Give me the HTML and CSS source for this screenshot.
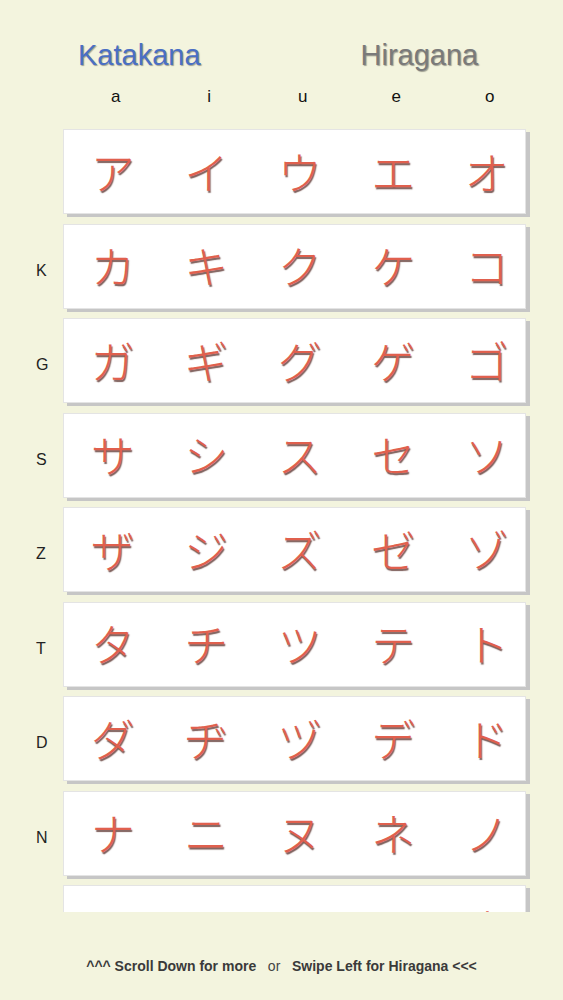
FILE: index.html
```html
<!DOCTYPE html>
<html lang="en">
<head>
    <meta charset="UTF-8">
    <meta name="viewport" content="width=device-width, initial-scale=1.0">
    <title>Katakana</title>
    <link rel="stylesheet" href="styles.css">
</head>
<body>
<div class="tabs">
    <div class="tab tab-active">Katakana</div>
    <div class="tab">Hiragana</div>
</div>
<div class="vowels">
    <span>a</span><span>i</span><span>u</span><span>e</span><span>o</span>
</div>
<div class="table">
    <div class="row">
        <div class="label"></div>
        <div class="card"><span>ア</span><span>イ</span><span>ウ</span><span>エ</span><span>オ</span></div>
    </div>
    <div class="row">
        <div class="label">K</div>
        <div class="card"><span>カ</span><span>キ</span><span>ク</span><span>ケ</span><span>コ</span></div>
    </div>
    <div class="row">
        <div class="label">G</div>
        <div class="card"><span>ガ</span><span>ギ</span><span>グ</span><span>ゲ</span><span>ゴ</span></div>
    </div>
    <div class="row">
        <div class="label">S</div>
        <div class="card"><span>サ</span><span>シ</span><span>ス</span><span>セ</span><span>ソ</span></div>
    </div>
    <div class="row">
        <div class="label">Z</div>
        <div class="card"><span>ザ</span><span>ジ</span><span>ズ</span><span>ゼ</span><span>ゾ</span></div>
    </div>
    <div class="row">
        <div class="label">T</div>
        <div class="card"><span>タ</span><span>チ</span><span>ツ</span><span>テ</span><span>ト</span></div>
    </div>
    <div class="row">
        <div class="label">D</div>
        <div class="card"><span>ダ</span><span>ヂ</span><span>ヅ</span><span>デ</span><span>ド</span></div>
    </div>
    <div class="row">
        <div class="label">N</div>
        <div class="card"><span>ナ</span><span>ニ</span><span>ヌ</span><span>ネ</span><span>ノ</span></div>
    </div>
    <div class="row">
        <div class="label"></div>
        <div class="card"><span>ハ</span><span>ヒ</span><span>フ</span><span>ヘ</span><span>ホ</span></div>
    </div>
</div>
<div class="footer">
    <b>^^^ Scroll Down for more</b>&nbsp;&nbsp;&nbsp;or&nbsp;&nbsp;&nbsp;<b>Swipe Left for Hiragana &lt;&lt;&lt;</b>
</div>
</body>
</html>
```
FILE: styles.css
```css
html, body {
    margin: 0;
    padding: 0;
}

body {
    background: #f3f4de;
    font-family: "Liberation Sans", Arial, sans-serif;
    color: #222;
    width: 563px;
    height: 1000px;
    overflow: hidden;
}

.tabs {
    display: flex;
    gap: 160px;
    padding: 38px 0 0 78px;
    height: 34px;
}

.tab {
    font-size: 29px;
    line-height: 34px;
    color: #7a7a7a;
    text-shadow: 1px 1px 1px rgba(0, 0, 0, 0.35);
}

.tab-active {
    color: #4a6fc4;
}

.vowels {
    display: grid;
    grid-template-columns: repeat(5, 93.5px);
    padding-left: 69px;
    margin-top: 15px;
    font-size: 17px;
    line-height: 20px;
    color: #111;
    text-align: center;
}

.table {
    margin-top: 22px;
    height: 783px;
    overflow: hidden;
}

.row {
    display: flex;
    align-items: center;
    margin-bottom: 9.5px;
}

.label {
    width: 63px;
    padding: 9px 0 0 36px;
    box-sizing: border-box;
    font-size: 16px;
    color: #222;
}

.card {
    width: 463px;
    height: 85px;
    box-sizing: border-box;
    background: #fff;
    border: 1px solid #e4e4e4;
    box-shadow: 4px 3px 0 #c6c6c6;
    display: grid;
    grid-template-columns: repeat(5, 93.5px);
    align-items: center;
    padding: 0 0 2px 2px;
}

.card span {
    text-align: center;
    font-family: "Noto Sans CJK JP", sans-serif;
    font-weight: 300;
    font-size: 44px;
    line-height: 50px;
    color: #e0604e;
    text-shadow: 1px 1.5px 1px rgba(70, 25, 20, 0.7);
}

.footer {
    padding-top: 45px;
    text-align: center;
    font-size: 14px;
    line-height: 18px;
    color: #444;
}

.footer b {
    color: #3a3a3a;
}
```
